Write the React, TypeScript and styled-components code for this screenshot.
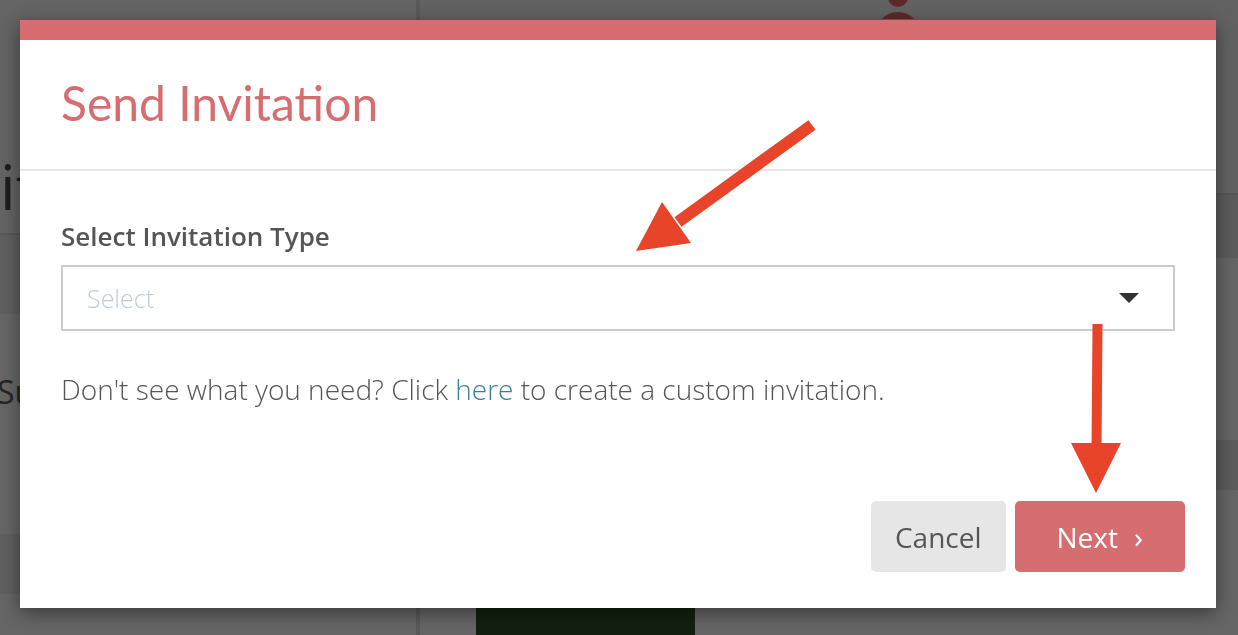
import React from "react";
import styled, { createGlobalStyle } from "styled-components";

const GlobalStyle = createGlobalStyle`
  html, body {
    margin: 0;
    padding: 0;
    height: 100%;
    overflow: hidden;
    background: #595959;
    font-family: "Open Sans", "Liberation Sans", sans-serif;
  }
  #root {
    height: 100%;
  }
`;

const ACCENT = "#d66e71";
const ARROW = "#e8442a";

export default function App() {
  return (
    <>
      <GlobalStyle />
      <Page>
        <LeftColumn>
          <TitleBlock>
            <PageTitle>it</PageTitle>
          </TitleBlock>
          <Band height={79} tone="#5f5f5f" />
          <Band height={220} tone="#666666">
            <BackText>Su</BackText>
          </Band>
          <Band height={60} tone="#5f5f5f" />
          <Band tone="#666666" grow />
        </LeftColumn>
        <RightColumn>
          <Band height={193} tone="#626262">
            <Avatar width="60" height="34" viewBox="0 0 60 34">
              <circle cx="28" cy="12" r="10" fill="#5d2a2a" />
              <ellipse cx="28" cy="53" rx="24" ry="26" fill="#5d2a2a" />
            </Avatar>
          </Band>
          <Band height={2} tone="#575757" />
          <Band height={63} tone="#5c5c5c" />
          <Band height={182} tone="#666666" />
          <Band height={50} tone="#5c5c5c" />
          <Band tone="#666666" grow>
            <GreenBlock />
          </Band>
        </RightColumn>
      </Page>

      <Modal>
        <ModalHeader>
          <ModalTitle>Send Invitation</ModalTitle>
        </ModalHeader>
        <ModalBody>
          <FieldLabel>Select Invitation Type</FieldLabel>
          <SelectBox>
            <Placeholder>Select</Placeholder>
            <Caret />
          </SelectBox>
          <HelpText>
            Don't see what you need? Click <Link>here</Link> to create a custom
            invitation.
          </HelpText>
        </ModalBody>
        <ModalFooter>
          <Button variant="plain">Cancel</Button>
          <Button variant="primary">
            Next <Chevron>›</Chevron>
          </Button>
        </ModalFooter>
      </Modal>

      <Annotations viewBox="0 0 1238 635">
        <line x1="812" y1="125" x2="678" y2="222" stroke={ARROW} strokeWidth="12" />
        <polygon points="662,202 691,243 636,251" fill={ARROW} />
        <line x1="1097.5" y1="324" x2="1096.5" y2="452" stroke={ARROW} strokeWidth="10" />
        <polygon points="1071,443 1121,443 1096,493" fill={ARROW} />
      </Annotations>
    </>
  );
}

const Page = styled("div")`
  display: grid;
  grid-template-columns: 416px 1fr;
  gap: 4px;
  height: 100%;
`;

const LeftColumn = styled("div")`
  display: flex;
  flex-direction: column;
`;

const RightColumn = styled("div")`
  display: flex;
  flex-direction: column;
`;

const TitleBlock = styled("div")`
  height: 235px;
  background: #646464;
  border-bottom: 2px solid #585858;
  padding-top: 146px;
  box-sizing: border-box;
`;

const PageTitle = styled("div")`
  font-family: "Open Sans", sans-serif;
  font-size: 62px;
  line-height: 80px;
  color: #1d1d1d;
`;

const Band = styled("div")<{ height?: number; tone: string; grow?: boolean }>`
  position: relative;
  height: ${(p) => (p.height ? `${p.height}px` : "auto")};
  flex: ${(p) => (p.grow ? "1" : "none")};
  background: ${(p) => p.tone};
`;

const BackText = styled("div")`
  padding-top: 56px;
  margin-left: -3px;
  font-size: 32px;
  color: #252525;
`;

const Avatar = styled("svg")`
  position: absolute;
  left: 450px;
  top: -15px;
`;

const GreenBlock = styled("div")`
  margin-left: 56px;
  margin-top: 118px;
  width: 219px;
  height: 40px;
  background: #13200f;
`;

const Modal = styled("div")`
  position: fixed;
  left: 20px;
  top: 20px;
  width: 1196px;
  height: 588px;
  box-sizing: border-box;
  background: #fff;
  border-top: 20px solid ${ACCENT};
  box-shadow: 0 5px 18px rgba(0, 0, 0, 0.45);
  display: flex;
  flex-direction: column;
`;

const ModalHeader = styled("div")`
  height: 131px;
  box-sizing: border-box;
  border-bottom: 2px solid #e6e6e6;
  padding: 30px 41px 0;
`;

const ModalTitle = styled("h1")`
  margin: 0;
  font-family: "Lato", "Open Sans", sans-serif;
  font-weight: 400;
  font-size: 48px;
  line-height: 66px;
  color: ${ACCENT};
`;

const ModalBody = styled("div")`
  padding: 48px 41px 0;
  flex: 1;
`;

const FieldLabel = styled("div")`
  font-size: 26px;
  font-weight: 600;
  line-height: 34px;
  color: #555;
`;

const SelectBox = styled("div")`
  margin-top: 12px;
  height: 66px;
  box-sizing: border-box;
  border: 2px solid #cccccc;
  display: flex;
  align-items: center;
  justify-content: space-between;
  padding: 0 34px 0 24px;
`;

const Placeholder = styled("span")`
  font-size: 25px;
  font-weight: 300;
  color: #bfccd5;
`;

const Caret = styled("span")`
  width: 0;
  height: 0;
  border-left: 10px solid transparent;
  border-right: 10px solid transparent;
  border-top: 10px solid #333;
`;

const HelpText = styled("p")`
  margin: 39px 0 0;
  font-size: 28px;
  font-weight: 300;
  line-height: 38px;
  color: #555;
`;

const Link = styled("a")`
  color: #3e7f98;
  cursor: pointer;
`;

const ModalFooter = styled("div")`
  display: flex;
  justify-content: flex-end;
  gap: 9px;
  padding: 0 31px 36px;
`;

const Button = styled("button")<{ variant: "plain" | "primary" }>`
  height: 71px;
  border: none;
  border-radius: 5px;
  padding: 0 ${(p) => (p.variant === "primary" ? "42px" : "24px")};
  font-family: "Open Sans", sans-serif;
  font-size: 28px;
  background: ${(p) => (p.variant === "primary" ? ACCENT : "#e6e6e6")};
  color: ${(p) => (p.variant === "primary" ? "#fff" : "#555")};
  display: flex;
  align-items: center;
  gap: 16px;
`;

const Chevron = styled("span")`
  font-size: 30px;
  font-weight: 400;
`;

const Annotations = styled("svg")`
  position: fixed;
  left: 0;
  top: 0;
  width: 1238px;
  height: 635px;
  pointer-events: none;
`;
